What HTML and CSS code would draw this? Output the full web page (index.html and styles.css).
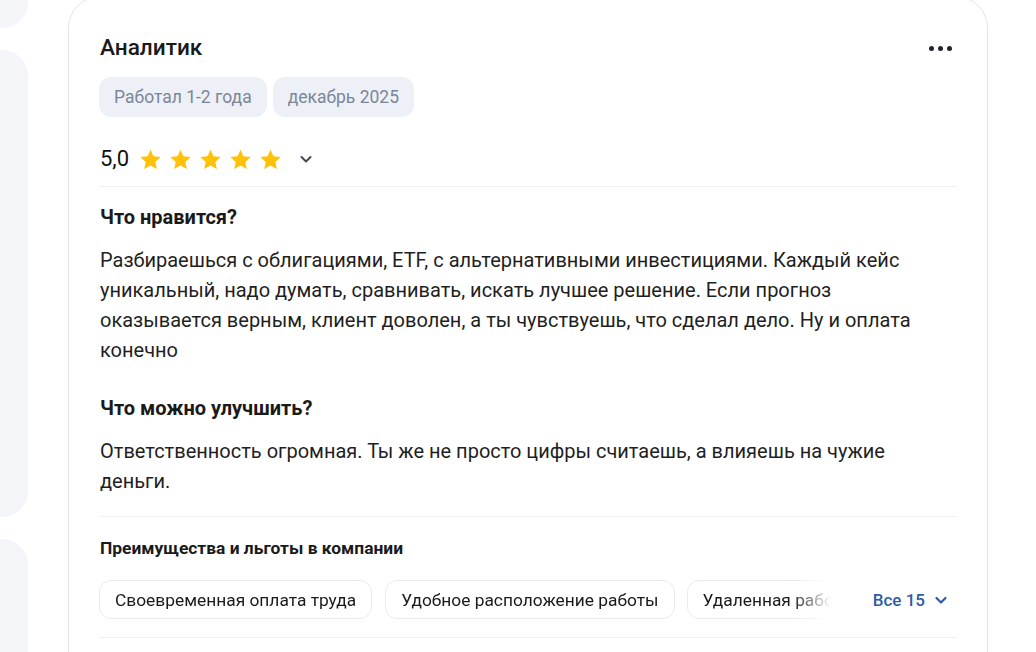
FILE: index.html
```html
<!DOCTYPE html>
<html lang="ru">
<head>
<meta charset="utf-8">
<link rel="stylesheet" href="styles.css">
</head>
<body>
<div class="page">
  <aside class="side">
    <div class="side-card side-card--a"></div>
    <div class="side-card side-card--b"></div>
    <div class="side-card side-card--c"></div>
  </aside>
  <article class="review">
    <header class="review-head">
      <h2 class="review-title">Аналитик</h2>
      <button class="more" aria-label="Ещё"><span></span><span></span><span></span></button>
    </header>
    <div class="tags">
      <span class="tag">Работал 1-2 года</span>
      <span class="tag">декабрь 2025</span>
    </div>
    <div class="rating">
      <span class="rating-value">5,0</span>
      <span class="stars">
        <svg class="star" viewBox="0 0 24 24"><path d="M12 1.8l3.1 6.9 7.5.8-5.6 5.1 1.6 7.4L12 18.2 5.4 22l1.6-7.4L1.4 9.5l7.5-.8z"/></svg>
        <svg class="star" viewBox="0 0 24 24"><path d="M12 1.8l3.1 6.9 7.5.8-5.6 5.1 1.6 7.4L12 18.2 5.4 22l1.6-7.4L1.4 9.5l7.5-.8z"/></svg>
        <svg class="star" viewBox="0 0 24 24"><path d="M12 1.8l3.1 6.9 7.5.8-5.6 5.1 1.6 7.4L12 18.2 5.4 22l1.6-7.4L1.4 9.5l7.5-.8z"/></svg>
        <svg class="star" viewBox="0 0 24 24"><path d="M12 1.8l3.1 6.9 7.5.8-5.6 5.1 1.6 7.4L12 18.2 5.4 22l1.6-7.4L1.4 9.5l7.5-.8z"/></svg>
        <svg class="star" viewBox="0 0 24 24"><path d="M12 1.8l3.1 6.9 7.5.8-5.6 5.1 1.6 7.4L12 18.2 5.4 22l1.6-7.4L1.4 9.5l7.5-.8z"/></svg>
      </span>
      <svg class="chev" viewBox="0 0 16 16"><path d="M3.5 6l4.5 4.5L12.5 6"/></svg>
    </div>
    <section class="block">
      <h3 class="block-title">Что нравится?</h3>
      <p class="block-text">Разбираешься с облигациями, ETF, с альтернативными инвестициями. Каждый кейс уникальный, надо думать, сравнивать, искать лучшее решение. Если прогноз оказывается верным, клиент доволен, а ты чувствуешь, что сделал дело. Ну и оплата конечно</p>
      <h3 class="block-title block-title--second">Что можно улучшить?</h3>
      <p class="block-text">Ответственность огромная. Ты же не просто цифры считаешь, а влияешь на чужие деньги.</p>
    </section>
    <section class="benefits">
      <h4 class="benefits-title">Преимущества и льготы в компании</h4>
      <div class="benefits-row">
        <div class="chips">
          <span class="chip">Своевременная оплата труда</span>
          <span class="chip">Удобное расположение работы</span>
          <span class="chip">Удаленная работа</span>
          <span class="chip">ДМС</span>
        </div>
        <button class="all"><span>Все 15</span><svg class="chev chev--blue" viewBox="0 0 16 16"><path d="M3.5 6l4.5 4.5L12.5 6"/></svg></button>
      </div>
    </section>
  </article>
</div>
</body>
</html>
```

FILE: styles.css
```css
* { box-sizing: border-box; }
html, body { margin: 0; padding: 0; background: #fff; }
body {
  font-family: Roboto, "Liberation Sans", Arial, sans-serif;
  color: #1a1a1a;
  overflow: hidden;
}
.page {
  display: flex;
  gap: 40px;
  align-items: flex-start;
  height: 652px;
  overflow: hidden;
}
.side {
  width: 28px;
  flex: none;
  display: flex;
  flex-direction: column;
  gap: 22px;
  margin-top: -200px;
}
.side-card {
  background: #f4f5f9;
  border-radius: 0 26px 26px 0;
}
.side-card--a { height: 228px; }
.side-card--b { height: 467px; }
.side-card--c { height: 300px; }

.review {
  width: 920px;
  flex: none;
  margin-top: -4px;
  border: 1px solid #dfe3ea;
  border-radius: 32px;
  padding: 37px 30px 40px 31px;
  height: 720px;
}
.review-head {
  display: flex;
  align-items: center;
  justify-content: space-between;
}
.review-title {
  margin: 0;
  font-size: 22.6px;
  line-height: 28px;
  font-weight: 500;
  color: #1a1a1a;
}
.more {
  border: 0;
  background: none;
  padding: 0;
  margin-right: 5px;
  display: flex;
  gap: 4px;
  cursor: pointer;
}
.more span {
  width: 5px;
  height: 5px;
  border-radius: 50%;
  background: #1f232b;
}
.tags {
  display: flex;
  gap: 6px;
  margin-top: 15px;
  margin-left: -1px;
}
.tag {
  height: 40px;
  display: inline-flex;
  align-items: center;
  padding: 0 15px;
  border-radius: 12px;
  background: #edf0f6;
  color: #7c8698;
  font-size: 17.5px;
}
.rating {
  display: flex;
  align-items: center;
  margin-top: 28px;
  height: 28px;
}
.rating-value {
  font-size: 22px;
  line-height: 28px;
  color: #111;
  margin-right: 10px;
}
.stars { display: flex; gap: 7px; }
.star { width: 23px; height: 23px; fill: #ffc10a; }
.chev {
  width: 16px;
  height: 16px;
  fill: none;
  stroke: #444a55;
  stroke-width: 2;
  stroke-linecap: round;
  stroke-linejoin: round;
  margin-left: 16px;
}
.block {
  margin-top: 13px;
  border-top: 1px solid #eef0f4;
  padding-top: 18px;
  padding-bottom: 20px;
}
.block-title {
  margin: 0;
  font-size: 20px;
  line-height: 24px;
  font-weight: 700;
  color: #1a1a1a;
}
.block-title--second { margin-top: 31px; }
.block-text {
  margin: 16px 0 0;
  font-size: 20px;
  line-height: 30px;
  color: #1f1f1f;
}
.benefits {
  border-top: 1px solid #eef0f4;
  border-bottom: 1px solid #eef0f4;
  padding: 20px 0 18px;
}
.benefits-title {
  margin: 0;
  font-size: 17.4px;
  line-height: 22px;
  font-weight: 700;
  color: #1a1a1a;
}
.benefits-row {
  display: flex;
  align-items: center;
  margin-top: 21px;
}
.chips {
  flex: 1;
  display: flex;
  gap: 12px;
  margin-left: -1px;
  overflow: hidden;
  -webkit-mask-image: linear-gradient(to right, #000 calc(100% - 42px), transparent calc(100% - 4px));
  mask-image: linear-gradient(to right, #000 calc(100% - 42px), transparent calc(100% - 4px));
}
.chip {
  flex: none;
  height: 39px;
  display: inline-flex;
  align-items: center;
  padding: 0 15px;
  border: 1px solid #e8ebf1;
  border-radius: 12px;
  font-size: 17.35px;
  color: #1a1a1a;
  background: #fff;
}
.chip:first-child { margin-right: 1px; }
.all {
  flex: none;
  border: 0;
  background: none;
  padding: 0 8px 0 38px;
  display: inline-flex;
  align-items: center;
  font-family: inherit;
  font-size: 17px;
  font-weight: 500;
  color: #2f5ba6;
  cursor: pointer;
}
.chev--blue { stroke: #2f5ba6; margin-left: 8px; stroke-width: 2.2; }
```
